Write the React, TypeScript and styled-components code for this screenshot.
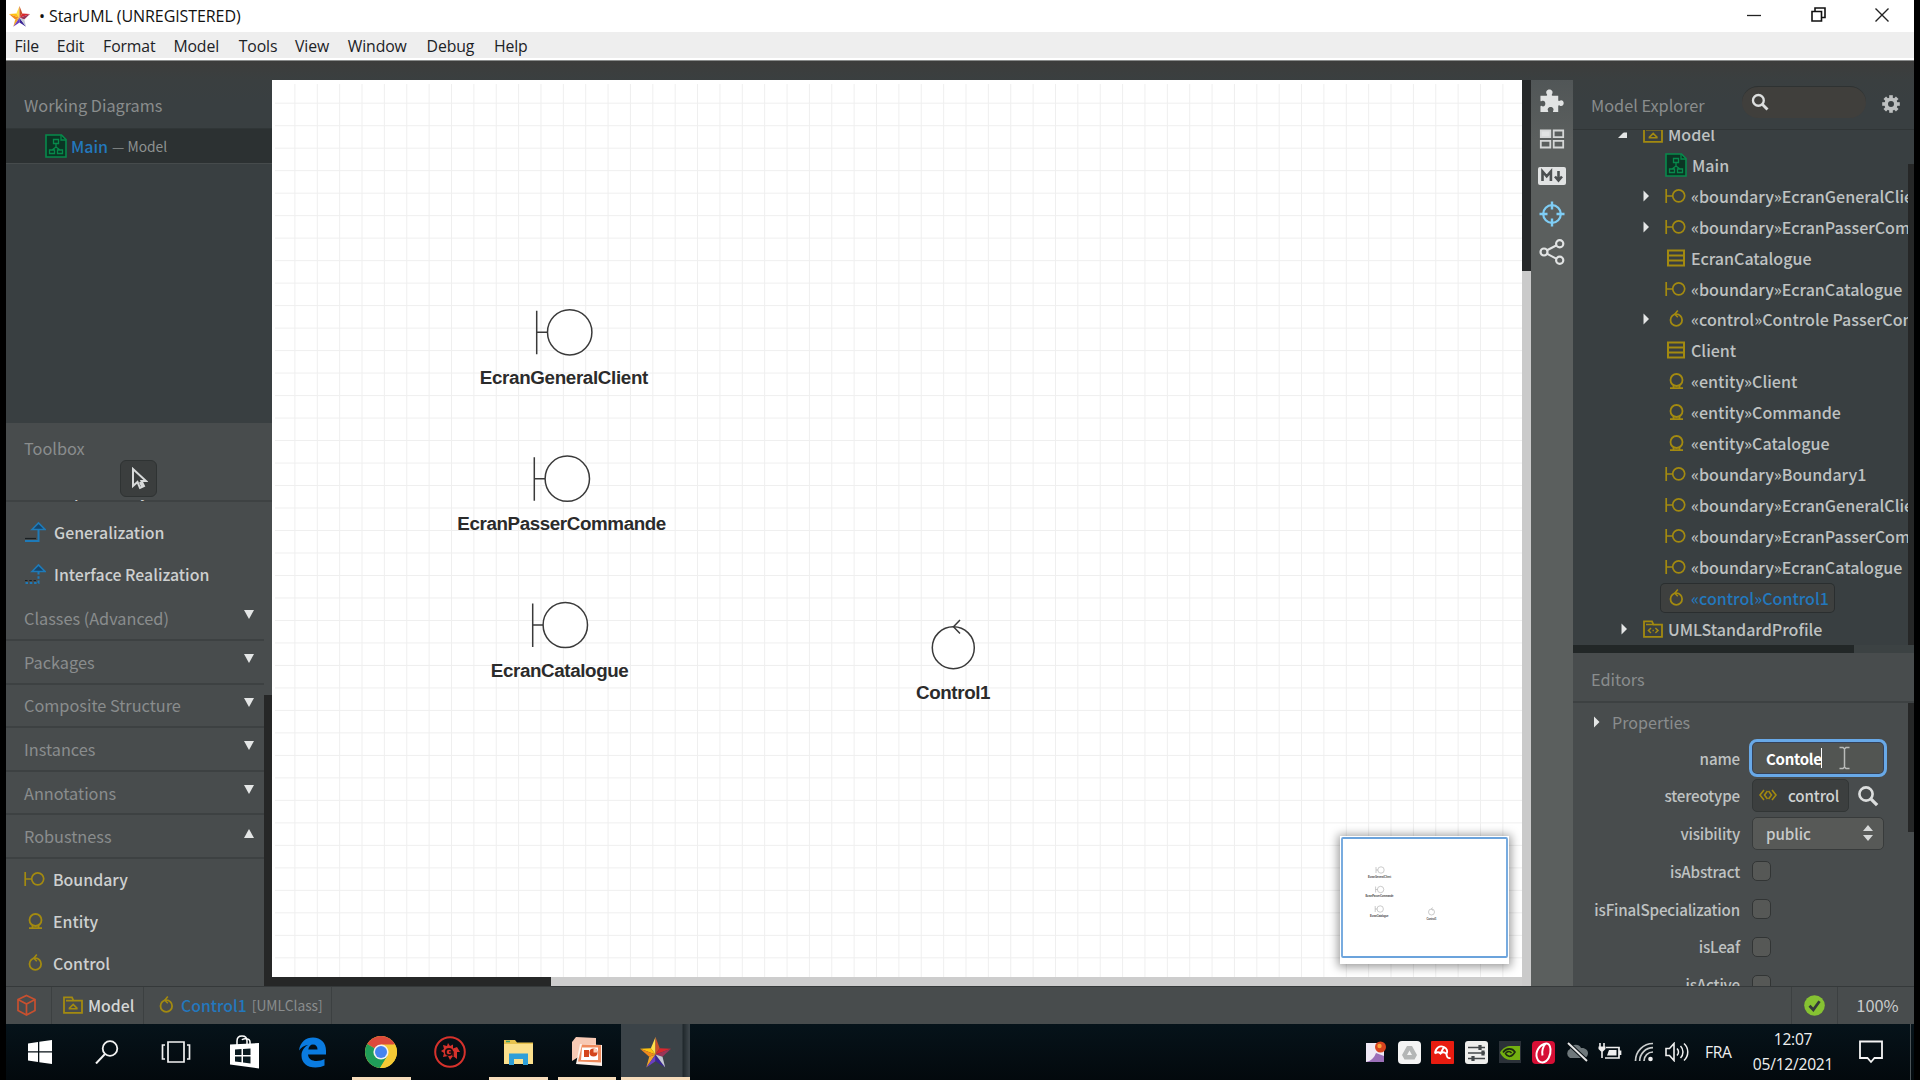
import React from "react";
import styled, { createGlobalStyle, css } from "styled-components";

const ui = '"Noto Sans CJK JP", "Noto Sans", sans-serif';
const sys = '"Open Sans", "Noto Sans", sans-serif';

const Global = createGlobalStyle`
  * { box-sizing: border-box; }
  body { margin: 0; background: #000; overflow: hidden; }
  svg { display: block; flex: none; }
`;

const Screen = styled.div`
  width: 1920px;
  height: 1080px;
  padding: 0 6px;
  background: #000;
  display: flex;
  flex-direction: column;
  font-family: ${ui};
  color: #c9cbcb;
  white-space: nowrap;
  overflow: hidden;
`;

/* ---------- window chrome ---------- */
const TitleBar = styled.header`
  height: 32px;
  flex: none;
  background: #fff;
  display: flex;
  align-items: center;
  padding-left: 3px;
  font: 16px/30px ${sys};
  color: #111;
`;
const TitleText = styled.span`
  margin-left: 9px;
  flex: 1;
  letter-spacing: -0.08px;
`;
const WindowButton = styled.span`
  width: 64px;
  display: flex;
  justify-content: center;
  padding-bottom: 3px;
`;
const MenuBar = styled.nav`
  height: 29px;
  flex: none;
  display: flex;
  align-items: center;
  gap: 17.8px;
  padding: 0 0 0 8.5px;
  background: #eee;
  border-bottom: 1px solid #8a8c8c;
  box-shadow: inset 0 -2px #fff;
  font: 15.8px/26px ${sys};
  color: #1c2226;
`;
const MenuItem = styled.span<{ $w: number }>`
  width: ${(p) => p.$w}px;
  letter-spacing: -0.12px;
`;

/* ---------- work area ---------- */
const WorkArea = styled.main`
  height: 925px;
  flex: none;
  display: flex;
  background: linear-gradient(#3d3d3c, #3a3f40 19px, #393f41 40px);
`;
const Sidebar = styled.aside`
  width: 266px;
  flex: none;
  display: flex;
  flex-direction: column;
`;
const Working = styled.section`
  height: 362px;
  flex: none;
  padding-top: 19px;
`;
const PanelTitle = styled.h2`
  margin: 0;
  font-size: 16.3px;
  font-weight: 400;
  line-height: 24px;
  color: #8a8d8d;
`;
const WorkingHead = styled.div`
  height: 48px;
  padding: 13px 0 0 18px;
`;
const WorkingRow = styled.div`
  height: 36px;
  background: #2c3132;
  border-bottom: 1px solid #464b4c;
  border-top: 1px solid #303637;
  display: flex;
  align-items: center;
  padding-left: 39px;
  gap: 4px;
  font-size: 16px;
  color: #8e9191;
`;
const Blue = styled.span`
  color: #2378bd;
  font-weight: 500;
`;
const Small = styled.span`
  font-size: 13.8px;
`;
const Toolbox = styled.section`
  flex: 1;
  min-height: 0;
  background: #484c4d;
  display: flex;
  flex-direction: column;
`;
const ToolboxHead = styled.div`
  height: 79px;
  flex: none;
  padding: 13px 0 0 18px;
  border-bottom: 2px solid #3e4243;
  display: grid;
  grid-template-rows: 24px 36px;
  grid-template-columns: 1fr;
`;
const PointerButton = styled.div`
  width: 37px;
  height: 37px;
  margin-left: 96px;
  border: 1px solid #2f3333;
  border-radius: 6px;
  background: #3b3e3e;
  display: flex;
  align-items: center;
  justify-content: center;
`;
const ToolScroll = styled.div`
  flex: 1;
  display: flex;
  min-height: 0;
  margin-top: -2px;
  overflow: hidden;
`;
const ToolList = styled.div`
  width: 258px;
  margin-top: -30px;
`;
const ToolItem = styled.div<{ $indent?: boolean }>`
  height: 42px;
  display: flex;
  align-items: center;
  padding: 0 0 1px ${(p) => (p.$indent ? 48 : 18)}px;
  gap: 8px;
  font-size: 15.9px;
  font-weight: 500;
  color: #ced0d0;
`;
const ToolGroup = styled.div<{ $first?: boolean }>`
  height: ${(p) => (p.$first ? 45 : 43.6)}px;
  border-bottom: 2px solid #3d4142;
  display: flex;
  align-items: center;
  justify-content: space-between;
  padding: 0 10px 0 18px;
  font-size: 16.3px;
  color: #8a8d8d;
`;
const Arrow = styled.i<{ $up?: boolean }>`
  width: 0;
  height: 0;
  margin-bottom: 6px;
  border: 5px solid transparent;
  ${(p) =>
    p.$up
      ? css`border-bottom: 9px solid #e4e6e6; border-top: 0;`
      : css`border-top: 9px solid #e4e6e6; border-bottom: 0;`}
`;
const ThumbColumn = styled.div`
  width: 8px;
  padding-top: 195px;
`;
const Thumb = styled.div<{ $h: number }>`
  height: ${(p) => p.$h}px;
  background: #262727;
`;

/* ---------- canvas ---------- */
const CanvasPane = styled.section`
  width: 1259px;
  flex: none;
  margin-top: 19px;
  display: grid;
  grid-template-columns: 1250px 9px;
  grid-template-rows: 897px 9px;
`;
const CanvasView = styled.div`
  position: relative;
  background: #fff;
`;
const VScroll = styled.div`
  grid-row: 1 / 3;
  grid-column: 2;
  background: linear-gradient(#262829 191px, #cacaca 191px);
`;
const HScroll = styled.div`
  grid-row: 2;
  grid-column: 1;
  background: linear-gradient(90deg, #262727 279px, #cdcdcd 279px);
`;
const Minimap = styled.div`
  position: absolute;
  left: 1068px;
  top: 756px;
  width: 169px;
  height: 128px;
  background: #fff;
  box-shadow: 0 1px 9px 2px rgba(0, 0, 0, 0.4);
`;
const ToolStrip = styled.div`
  width: 42px;
  flex: none;
  margin-top: 19px;
  background: linear-gradient(#515657, #5b5f5e 60px);
  display: flex;
  flex-direction: column;
  align-items: center;
  padding: 2px 1px 0 0;
`;
const StripSlot = styled.div`
  height: 37.8px;
  display: flex;
  align-items: center;
`;

/* ---------- right panels ---------- */
const RightPane = styled.aside`
  flex: 1;
  min-width: 0;
  display: flex;
  flex-direction: column;
`;
const ExplorerHead = styled.div`
  height: 69px;
  flex: none;
  padding: 25px 12px 0 18px;
  border-bottom: 1px solid #303536;
  display: flex;
  align-items: flex-start;
`;
const ExplorerTitle = styled(PanelTitle)`
  width: 151px;
  padding-top: 7px;
`;
const SearchPill = styled.div`
  width: 124px;
  height: 32px;
  border-radius: 16px;
  border-top: 1px solid #2e3232;
  background: #403f3c;
  padding: 6px 9px;
`;
const Gear = styled.div`
  margin: 9px 0 0 16px;
`;
const Explorer = styled.div`
  height: 515px;
  flex: none;
  display: grid;
  grid-template-columns: 335px 6px;
`;
const Tree = styled.div`
  overflow: hidden;
  height: 515px;
`;
const TreeBody = styled.div`
  margin-top: -11.5px;
`;
const TreeRow = styled.div<{ $depth: number; $cut?: boolean }>`
  height: 30.93px;
  display: flex;
  align-items: center;
  padding-left: ${(p) => 45 + p.$depth * 22}px;
  font-size: 16.05px;
  font-weight: 500;
  color: #bfc2c2;
  & svg { clip-path: ${(p) => (p.$cut ? "inset(3px 0 0 0)" : "none")}; }
`;
const Twist = styled.span`
  width: 24px;
  height: 12px;
  flex: none;
  display: flex;
  align-items: center;
  justify-content: flex-start;
`;
const TreeLabel = styled.span<{ $selected?: boolean }>`
  height: 28px;
  flex: none;
  display: flex;
  align-items: center;
  gap: 5px;
  margin-left: 1px;
  padding-right: 5px;
  border-radius: 4px;
  ${(p) =>
    p.$selected &&
    css`
      background: #3e403f;
      box-shadow: 0 0 0 1px #2a2e2f;
      color: #2378bd;
      padding-left: 4px;
      margin-left: -3px;
    `}
`;
const ExplorerThumb = styled.div`
  padding-top: 34px;
`;
const TreeHScroll = styled.div`
  height: 8px;
  flex: none;
  background: linear-gradient(90deg, #222727 281px, #3c4243 281px);
`;
const Editors = styled.section`
  flex: 1;
  min-height: 0;
  background: #484c4d;
  overflow: hidden;
`;
const EditorsHead = styled.div`
  height: 50px;
  padding: 14px 0 0 18px;
  border-bottom: 2px solid #3d4142;
`;
const EditorBody = styled.div`
  display: grid;
  grid-template-columns: 335px 6px;
`;
const PropTitle = styled.div`
  height: 36px;
  display: flex;
  align-items: center;
  gap: 12px;
  padding: 2px 0 0 21px;
  font-size: 16.1px;
  color: #8a8d8d;
`;
const PropRow = styled.div`
  height: 37.8px;
  display: grid;
  grid-template-columns: 167px 1fr;
  column-gap: 12px;
  align-items: center;
`;
const PropLabel = styled.label`
  text-align: right;
  font-size: 15.2px;
  letter-spacing: -0.18px;
  font-weight: 500;
  line-height: 30px;
  padding-bottom: 1px;
  color: #bfc2c2;
`;
const NameField = styled.div`
  width: 138px;
  height: 38px;
  margin-left: -3px;
  border: 3px solid #68a9e8;
  border-radius: 8px;
  background: #525552;
  box-shadow: inset 0 0 0 1px #35425a;
  display: flex;
  align-items: center;
  padding: 0 0 0 14px;
  font-size: 15px;
  font-weight: 700;
  letter-spacing: -0.3px;
  color: #fff;
`;
const Caret = styled.i`
  width: 1.5px;
  height: 20px;
  margin: 0 17px 0 -1px;
  background: #fff;
`;
const StereoLine = styled.div`
  display: flex;
  align-items: center;
  gap: 8px;
`;
const StereoButton = styled.div`
  width: 97px;
  height: 33px;
  border: 1px solid #323636;
  border-radius: 5px;
  background: #3c3f3f;
  display: flex;
  align-items: center;
  gap: 11px;
  padding: 0 0 1px 6px;
  font-size: 15.2px;
  letter-spacing: -0.15px;
  font-weight: 500;
  color: #d0d2d2;
`;
const SelectBox = styled.div`
  width: 132px;
  height: 33px;
  border: 1px solid #383b3b;
  border-radius: 5px;
  background: #575957;
  display: flex;
  align-items: center;
  justify-content: space-between;
  padding: 0 10px 0 13px;
  font-size: 15.2px;
  letter-spacing: -0.1px;
  font-weight: 500;
  color: #c9cbcb;
`;
const Check = styled.div`
  width: 19px;
  height: 20px;
  border: 1px solid #323535;
  border-radius: 5px;
  background: #565856;
`;

/* ---------- status bar ---------- */
const StatusBar = styled.footer`
  height: 38px;
  flex: none;
  background: #484c4d;
  border-top: 1px solid #35393a;
  display: flex;
`;
const StatusCell = styled.div<{ $w: number; $right?: boolean }>`
  width: ${(p) => p.$w}px;
  display: flex;
  align-items: center;
  justify-content: ${(p) => (p.$right ? "center" : "flex-start")};
  gap: 5px;
  padding-bottom: 1px;
  font-size: 15.8px;
  ${(p) => (p.$right ? "border-left" : "border-right")}: 1px solid #3c4041;
`;
const StatusGap = styled.div`
  flex: 1;
`;
const CellIcon = styled.span<{ $l: number }>`
  margin-left: ${(p) => p.$l}px;
`;
const Zoom = styled.span`
  font-size: 16.4px;
  padding-left: 3px;
`;
const Bold = styled.span`
  font-weight: 500;
  color: #d4d6d6;
`;
const Dim = styled.span`
  font-size: 13.8px;
  color: #8a8d8d;
`;

/* ---------- taskbar ---------- */
const Taskbar = styled.footer`
  height: 56px;
  flex: none;
  background: linear-gradient(#06131a, #03090d);
  display: flex;
  color: #f0f0f0;
  font-family: ${sys};
`;
const TaskSlot = styled.div<{ $active?: boolean; $open?: boolean; $w?: number }>`
  width: ${(p) => p.$w ?? 68.5}px;
  display: flex;
  align-items: center;
  justify-content: center;
  padding-top: 3px;
  background: ${(p) => (p.$active ? "linear-gradient(90deg, #3b4348 61px, #20282c 62px, #3b4348 68px)" : "none")};
  border-bottom: 3px solid transparent;
  border-image: ${(p) =>
    p.$active
      ? "linear-gradient(#f6dcbb,#f6dcbb) 1"
      : p.$open
      ? "linear-gradient(90deg, transparent 9%, #f6dcbb 9%, #f6dcbb 91%, transparent 91%) 1"
      : "none"};
`;
const Tray = styled.div`
  margin-left: auto;
  display: flex;
  align-items: center;
`;
const TraySlot = styled.div`
  width: 33.5px;
  display: flex;
  justify-content: center;
`;
const Lang = styled.div`
  width: 53px;
  padding-left: 11px;
  font-size: 15.6px;
  letter-spacing: -0.3px;
`;
const Clock = styled.div`
  width: 92px;
  text-align: center;
  font-size: 15.6px;
  line-height: 25.5px;
  letter-spacing: -0.25px;
`;
const Notify = styled.div`
  width: 72px;
  height: 56px;
  border-right: 1px solid #4b5357;
  display: flex;
  align-items: center;
  justify-content: center;
  padding-right: 8px;
  margin-right: 3px;
`;

/* ---------- drawings ---------- */
const GOLD = "#a38a10";

const Svg = ({ w, h = w, vb, children }: { w: number; h?: number; vb?: string; children: React.ReactNode }) => (
  <svg width={w} height={h} viewBox={vb ?? `0 0 ${w} ${h}`} fill="none">
    {children}
  </svg>
);

type Kind = "boundary" | "entity" | "control" | "class" | "package" | "profile" | "diagram";

const Glyph = ({ kind }: { kind: Kind }) => {
  switch (kind) {
    case "boundary":
      return (
        <Svg w={21} h={20}>
          <path d="M1.2 3v14M1.2 10h6" stroke={GOLD} strokeWidth="1.7" />
          <circle cx="13.7" cy="9.8" r="6" stroke={GOLD} strokeWidth="1.7" />
        </Svg>
      );
    case "entity":
      return (
        <Svg w={21} h={20}>
          <circle cx="11.5" cy="9" r="6" stroke={GOLD} strokeWidth="1.8" />
          <path d="M5 17.2h13M8.5 14v3M14.5 14v3" stroke={GOLD} strokeWidth="1.8" />
        </Svg>
      );
    case "control":
      return (
        <Svg w={21} h={20}>
          <circle cx="11.3" cy="11" r="5.8" stroke={GOLD} strokeWidth="1.8" />
          <path d="M12.8 1.5l-3 3.700 3 3" stroke={GOLD} strokeWidth="1.6" />
        </Svg>
      );
    case "class":
      return (
        <Svg w={21} h={20}>
          <rect x="3" y="2.5" width="16" height="15" stroke={GOLD} strokeWidth="2" />
          <path d="M3 7.5h16M3 12.5h16" stroke={GOLD} strokeWidth="2" />
        </Svg>
      );
    case "package":
      return (
        <Svg w={20} h={20}>
          <path d="M1 17.8V2.4h8l1.5 3.2H19v12.2z" stroke={GOLD} strokeWidth="1.8" />
          <path d="M3 5.6h7M5.6 13.8h9M6 13.6l4.2-4.2 4.2 4.2" stroke={GOLD} strokeWidth="1.6" />
        </Svg>
      );
    case "profile":
      return (
        <Svg w={20} h={20}>
          <path d="M1 17.8V2.4h8l1.5 3.2H19v12.2z" stroke={GOLD} strokeWidth="1.8" />
          <path d="M3 5.6h7M8 9l-2.6 2.6L8 14M12.4 9l2.6 2.6-2.6 2.4M9.5 11.6h1.4" stroke={GOLD} strokeWidth="1.5" />
        </Svg>
      );
    case "diagram":
      return (
        <Svg w={22} h={24}>
          <path d="M1 1h15.5L21 5.5V23H1z" fill="#0b3524" stroke="#078a4b" strokeWidth="1.6" />
          <path d="M16 1v5h5" stroke="#078a4b" strokeWidth="1.3" />
          <path d="M8.5 5.5h5v4h-5zM11 9.500v3.500M11 13l-4 3M11 13l4 3M4.500 16h5v3.500h-5zM12.500 16h5v3.500h-5z" stroke="#078a4b" strokeWidth="1.3" />
        </Svg>
      );
  }
};

const Star = ({ s }: { s: number }) => (
  <Svg w={s} vb="0 0 32 32">
    <path d="M16 0l-4.800 11.500L16 18z" fill="#ffe04a" />
    <path d="M16 0l4.400 11.500L16 18z" fill="#c9502a" />
    <path d="M0 12l11.200-.5L16 18z" fill="#ffc20e" />
    <path d="M0 12l9.500 8.500L16 18z" fill="#f08a1d" />
    <path d="M32 12l-11.600-.5L16 18z" fill="#d9272e" />
    <path d="M32 12l-8.800 8.500L16 18z" fill="#9a3558" />
    <path d="M9.500 20.500l-3 11L16 18z" fill="#f3a526" />
    <path d="M6.500 31.500L16 25v-7z" fill="#6b3fc0" />
    <path d="M26 31.500L16 25v-7z" fill="#3a2596" />
    <path d="M26 31.500l-2.800-11L16 18z" fill="#c5c8d4" />
  </Svg>
);

const Magnifier = ({ s, w = 2.6 }: { s: number; w?: number }) => (
  <Svg w={s} vb="0 0 20 20">
    <circle cx="8.200" cy="8.200" r="6" stroke="#dcdede" strokeWidth={w} />
    <path d="M12.800 12.800L18.300 18.300" stroke="#dcdede" strokeWidth={w + 0.6} />
  </Svg>
);

const Generalization = ({ dashed }: { dashed?: boolean }) => (
  <Svg w={22} h={24}>
    <path d="M8 8.500L14.500 2l6.500 6.500z" fill="#16456b" stroke="#1e7ab8" strokeWidth="1.600" />
    <path d="M14.500 9v11H1" stroke="#1e7ab8" strokeWidth="2" strokeDasharray={dashed ? "2.500 1.800" : undefined} />
    <path d="M1 17.500h11" stroke="#1a1f22" strokeWidth="1.200" strokeDasharray={dashed ? "2.500 1.800" : undefined} />
  </Svg>
);

const gearTeeth = Array.from({ length: 8 }, (_, i) => i * 45);

const boundaries = [
  { bar: 536.7, cx: 569.7, cy: 332.3, label: "EcranGeneralClient", x: 479.8, w: 168.5, y: 384 },
  { bar: 534.3, cx: 567.3, cy: 478.7, label: "EcranPasserCommande", x: 457.3, w: 209, y: 530.3 },
  { bar: 532.7, cx: 565.3, cy: 625, label: "EcranCatalogue", x: 490.8, w: 138, y: 676.5 },
];

const Diagram = () => {
  const cols = Array.from({ length: 55 }, (_, i) => 294.9 + i * 22.37);
  const rows = Array.from({ length: 39 }, (_, i) => 103.2 + i * 22.49);
  return (
    <Svg w={1250} h={897} vb="272 80 1250 897">
      <g stroke="#efefef" strokeWidth="1">
        {cols.map((x) => <path key={x} d={`M${x} 84V977`} />)}
        {rows.map((y) => <path key={y} d={`M275 ${y}H1522`} />)}
      </g>
      <g stroke="#3a3a3a" strokeWidth="1.5">
        {boundaries.map((b) => (
          <g key={b.label}>
            <path d={`M${b.bar} ${b.cy - 21.5}v43.5M${b.bar} ${b.cy}H${b.cx - 22}`} />
            <ellipse cx={b.cx} cy={b.cy} rx="22.2" ry="22.6" fill="#fff" />
          </g>
        ))}
        <circle cx="953.3" cy="647.7" r="21" fill="#fff" />
        <path d="M960 620l-6.5 6.7 6.5 6.8" />
      </g>
      <g fill="#2b2b2b" fontFamily='"Liberation Sans", Arial, sans-serif' fontWeight="700" fontSize="18.8">
        {boundaries.map((b) => (
          <text key={b.label} x={b.x} y={b.y} textLength={b.w}>{b.label}</text>
        ))}
        <text x="916" y="698.5" textLength="74.5">Control1</text>
      </g>
    </Svg>
  );
};

const MiniDiagram = () => (
  <Svg w={169} h={128}>
    <rect x="2" y="2" width="165" height="119" rx="1" fill="#fff" stroke="#6ba3dc" strokeWidth="1.8" />
    <g stroke="#aaa" strokeWidth="0.6">
      {[34, 53.5, 73].map((y, i) => (
        <g key={y}>
          <path d={`M${36 - i * 0.4} ${y - 3}v6m0-3h2`} />
          <circle cx={41 - i * 0.4} cy={y} r="3.200" />
        </g>
      ))}
      <circle cx="91.5" cy="76" r="3" />
      <path d="M92.5 71.500l-1 1.500 1 1.500" />
    </g>
    <g fill="#444" fontFamily='"Liberation Sans", Arial, sans-serif' fontWeight="700" fontSize="2.600">
      <text x="28" y="41.5" textLength="23">EcranGeneralClient</text>
      <text x="25.5" y="61" textLength="28">EcranPasserCommande</text>
      <text x="30" y="80.5" textLength="18.500">EcranCatalogue</text>
      <text x="86.5" y="83.5" textLength="10">Control1</text>
    </g>
  </Svg>
);

const menus: [string, number][] = [
  ["File", 24.5], ["Edit", 28.5], ["Format", 52.5], ["Model", 47.5], ["Tools", 38.5],
  ["View", 35], ["Window", 61], ["Debug", 49.5], ["Help", 35],
];

const groups = ["Classes (Advanced)", "Packages", "Composite Structure", "Instances", "Annotations", "Robustness"];

type Node = { label: string; kind: Kind; depth: number; twist?: "open" | "closed"; selected?: boolean; cut?: boolean };
const nodes: Node[] = [
  { label: "Model", kind: "package", depth: 0, twist: "open", cut: true },
  { label: "Main", kind: "diagram", depth: 1 },
  { label: "«boundary»EcranGeneralClient", kind: "boundary", depth: 1, twist: "closed" },
  { label: "«boundary»EcranPasserCommande", kind: "boundary", depth: 1, twist: "closed" },
  { label: "EcranCatalogue", kind: "class", depth: 1 },
  { label: "«boundary»EcranCatalogue", kind: "boundary", depth: 1 },
  { label: "«control»Controle PasserCommande", kind: "control", depth: 1, twist: "closed" },
  { label: "Client", kind: "class", depth: 1 },
  { label: "«entity»Client", kind: "entity", depth: 1 },
  { label: "«entity»Commande", kind: "entity", depth: 1 },
  { label: "«entity»Catalogue", kind: "entity", depth: 1 },
  { label: "«boundary»Boundary1", kind: "boundary", depth: 1 },
  { label: "«boundary»EcranGeneralClient", kind: "boundary", depth: 1 },
  { label: "«boundary»EcranPasserCommande", kind: "boundary", depth: 1 },
  { label: "«boundary»EcranCatalogue", kind: "boundary", depth: 1 },
  { label: "«control»Control1", kind: "control", depth: 1, selected: true },
  { label: "UMLStandardProfile", kind: "profile", depth: 0, twist: "closed" },
];

const LeftSide = () => (
  <Sidebar>
    <Working>
      <WorkingHead><PanelTitle>Working Diagrams</PanelTitle></WorkingHead>
      <WorkingRow>
        <Glyph kind="diagram" />
        <Blue>Main</Blue>
        <Small>— Model</Small>
      </WorkingRow>
    </Working>
    <Toolbox>
      <ToolboxHead>
        <PanelTitle>Toolbox</PanelTitle>
        <PointerButton>
          <Svg w={18} h={24}>
            <path d="M3 2v17l4.500-4 2.500 6 4-2-2.500-5H16z" stroke="#d8dada" strokeWidth="2" />
            <path d="M9 15.500l2.500 5 2-1-2.300-5z" fill="#d8dada" />
          </Svg>
        </PointerButton>
      </ToolboxHead>
      <ToolScroll>
        <ToolList>
          <ToolItem $indent>Dependency</ToolItem>
          <ToolItem><Generalization />Generalization</ToolItem>
          <ToolItem><Generalization dashed />Interface Realization</ToolItem>
          {groups.map((g, i) => (
            <ToolGroup key={g} $first={i === 0}>
              {g}
              <Arrow $up={g === "Robustness"} />
            </ToolGroup>
          ))}
          <ToolItem><Glyph kind="boundary" />Boundary</ToolItem>
          <ToolItem><Glyph kind="entity" />Entity</ToolItem>
          <ToolItem><Glyph kind="control" />Control</ToolItem>
        </ToolList>
        <ThumbColumn><Thumb $h={291} /></ThumbColumn>
      </ToolScroll>
    </Toolbox>
  </Sidebar>
);

const Strip = () => (
  <ToolStrip>
    <StripSlot>
      <Svg w={25} h={25} vb="0 0 26 26">
        <path
          d="M1.500 8h6.200c.9 0 1-.8.500-1.500C6.600 4 8 1.500 10.800 1.500S15 4 13.500 6.500c-.4.700-.3 1.500.6 1.500H20v4.500c0 .9.700 1.200 1.400.7 2-1.400 4.300 0 4.300 2.500s-2.300 4-4.300 2.600c-.7-.5-1.400-.2-1.400.7V25h-4.600c-1 0-1-.7-.6-1.400 1-2-.4-3.900-2.700-3.900s-3.700 1.900-2.700 3.900c.4.700.3 1.400-.6 1.400H1.500v-5.500c0-.9.600-1.200 1.300-.7 1.900 1.100 3.800-.3 3.800-2.700s-1.900-3.600-3.800-2.500c-.7.500-1.300.2-1.300-.7z"
          fill="#e1e3e3"
        />
      </Svg>
    </StripSlot>
    <StripSlot>
      <Svg w={26} h={20}>
        <rect x="1" y="1" width="11" height="8" fill="#e1e3e3" />
        <path d="M1.800 1.500h9.500v6.700H1.800zM14.700 1.500h9.500v6.700h-9.500zM1.800 11.800h9.500v6.700H1.800zM14.700 11.800h9.500v6.700h-9.500z" stroke="#d5d7d7" strokeWidth="1.8" />
      </Svg>
    </StripSlot>
    <StripSlot>
      <Svg w={28} h={18}>
        <rect width="28" height="18" rx="2" fill="#e1e3e3" />
        <path d="M4.500 14V4.500l4.200 4.800 4.200-4.800V14M20.500 4v8M17 9.500l3.500 4 3.500-4" stroke="#4c5051" strokeWidth="2.6" />
      </Svg>
    </StripSlot>
    <StripSlot>
      <Svg w={26} h={26}>
        <circle cx="13" cy="13" r="8.800" stroke="#7fcdf5" strokeWidth="2.2" />
        <path d="M13 .5v8M13 17.500v8M.5 13h8M17.500 13h8" stroke="#7fcdf5" strokeWidth="2.4" />
      </Svg>
    </StripSlot>
    <StripSlot>
      <Svg w={26} h={26}>
        <path d="M4.700 13L21 4.500M4.700 13L21 21.700" stroke="#e1e3e3" strokeWidth="2" />
        <g fill="#5b5f5e" stroke="#e1e3e3" strokeWidth="2.2">
          <circle cx="5" cy="13" r="3.500" />
          <circle cx="20.700" cy="4.800" r="3.600" />
          <circle cx="20.700" cy="21.200" r="3.600" />
        </g>
      </Svg>
    </StripSlot>
  </ToolStrip>
);

const TwistMark = ({ state }: { state?: "open" | "closed" }) => (
  <Twist>
    {state === "open" && <Svg w={9} h={9}><path d="M9 0v9H0z" fill="#e4e6e6" /></Svg>}
    {state === "closed" && <Svg w={10} h={12}><path d="M3.500.5L9 6l-5.500 5.500z" fill="#e4e6e6" /></Svg>}
  </Twist>
);

const RightSide = () => (
  <RightPane>
    <ExplorerHead>
      <ExplorerTitle>Model Explorer</ExplorerTitle>
      <SearchPill><Magnifier s={18} /></SearchPill>
      <Gear>
        <Svg w={18} vb="0 0 18 18">
          <g fill="#bdc0c0">
            {gearTeeth.map((a) => <rect key={a} x="7.200" y="0.200" width="3.600" height="5" transform={`rotate(${a} 9 9)`} />)}
          </g>
          <circle cx="9" cy="9" r="4.800" stroke="#bdc0c0" strokeWidth="3.600" />
        </Svg>
      </Gear>
    </ExplorerHead>
    <Explorer>
      <Tree>
        <TreeBody>
          {nodes.map((n, i) => (
            <TreeRow key={i} $depth={n.depth} $cut={n.cut}>
              <TwistMark state={n.twist} />
              <TreeLabel $selected={n.selected}>
                <Glyph kind={n.kind} />
                {n.label}
              </TreeLabel>
            </TreeRow>
          ))}
        </TreeBody>
      </Tree>
      <ExplorerThumb><Thumb $h={481} /></ExplorerThumb>
    </Explorer>
    <TreeHScroll />
    <Editors>
      <EditorsHead><PanelTitle>Editors</PanelTitle></EditorsHead>
      <EditorBody>
        <div>
          <PropTitle>
            <Svg w={6} h={12}><path d="M0 .5L5.500 6 0 11.500z" fill="#e4e6e6" /></Svg>
            Properties
          </PropTitle>
          <PropRow>
            <PropLabel>name</PropLabel>
            <NameField>
              Contole
              <Caret />
              <Svg w={11} h={24}>
                <path d="M.5 1.500h3.500L5.500 3 7 1.500h3.500M.5 22.500h3.500L5.500 21 7 22.500h3.500M5.500 3v18" stroke="#b9bbb9" strokeWidth="1.5" />
              </Svg>
            </NameField>
          </PropRow>
          <PropRow>
            <PropLabel>stereotype</PropLabel>
            <StereoLine>
              <StereoButton>
                <Svg w={18} h={12}>
                  <path d="M5 1L1 6l4 5M8.500 2L5.500 6l3 4M9.500 2l3 4-3 4M13 1l4 5-4 5" stroke={GOLD} strokeWidth="1.6" />
                </Svg>
                control
              </StereoButton>
              <Magnifier s={22} w={2.4} />
            </StereoLine>
          </PropRow>
          <PropRow>
            <PropLabel>visibility</PropLabel>
            <SelectBox>
              public
              <Svg w={10} h={16}><path d="M5 0l5 6H0zM5 16l5-6H0z" fill="#d6d8d8" /></Svg>
            </SelectBox>
          </PropRow>
          {["isAbstract", "isFinalSpecialization", "isLeaf", "isActive"].map((p) => (
            <PropRow key={p}>
              <PropLabel>{p}</PropLabel>
              <Check />
            </PropRow>
          ))}
        </div>
        <Thumb $h={129} />
      </EditorBody>
    </Editors>
  </RightPane>
);

const Status = () => (
  <StatusBar>
    <StatusCell $w={46}>
      <CellIcon $l={10}>
        <Svg w={21} h={22}>
          <path d="M10.500 1.500l8.500 4v11l-8.500 4.500L2 16.500v-11zM2 5.500l8.500 4.500 8.500-4.500M10.500 10v11" stroke="#c8502f" strokeWidth="1.7" />
        </Svg>
      </CellIcon>
    </StatusCell>
    <StatusCell $w={92}>
      <CellIcon $l={11}><Glyph kind="package" /></CellIcon>
      <Bold>Model</Bold>
    </StatusCell>
    <StatusCell $w={188}>
      <CellIcon $l={11}><Glyph kind="control" /></CellIcon>
      <Blue>Control1</Blue>
      <Dim>[UMLClass]</Dim>
    </StatusCell>
    <StatusGap />
    <StatusCell $w={46} $right>
      <Svg w={21} h={21}>
        <circle cx="10.500" cy="10.500" r="10.300" fill="#86c232" />
        <path d="M5.500 10.800l3.800 4L15.500 6.200" stroke="#33393a" strokeWidth="2.8" />
      </Svg>
    </StatusCell>
    <StatusCell $w={77} $right><Zoom>100%</Zoom></StatusCell>
  </StatusBar>
);

const Taskline = () => (
  <Taskbar>
    <TaskSlot $w={67}>
      <Svg w={24} h={24}>
        <path d="M0 3.500L10 2v9.300H0zM11.300 1.800L24 0v11.300H11.300zM0 12.600h10V22L0 20.500zM11.300 12.600H24V24l-12.700-1.800z" fill="#fff" />
      </Svg>
    </TaskSlot>
    <TaskSlot>
      <Svg w={24} h={24}>
        <circle cx="15" cy="8.500" r="7.300" stroke="#f2f2f2" strokeWidth="1.8" />
        <path d="M10 14L1 23.500" stroke="#f2f2f2" strokeWidth="2" />
      </Svg>
    </TaskSlot>
    <TaskSlot>
      <Svg w={30} h={22}>
        <path d="M7 1h16v20H7zM4 4H1.500v14H4M26 4h2.500v14H26" stroke="#f2f2f2" strokeWidth="1.7" />
      </Svg>
    </TaskSlot>
    <TaskSlot>
      <Svg w={31} h={34}>
        <path d="M1 9.500L30 8v25.500L1 29.500z" fill="#fff" />
        <path d="M8 11V6c0-3 2-5 5-5s5 2 5 5v4M13 5c1-2 8-2 8 2v3" stroke="#fff" strokeWidth="1.5" />
        <path d="M6 14.500l6.500-.5v6H6zM14 13.900l7.500-.5V20H14zM6 21.500h6.500v5.800L6 26.500zM14 21.500h7.500v7L14 27.500z" fill="#0a1a20" />
      </Svg>
    </TaskSlot>
    <TaskSlot>
      <Svg w={29} h={31}>
        <path
          d="M1 13.500C2 5 8 .5 15 .5c8 0 13 5.500 13 13v4H10c.3 4.500 4 6.500 8.500 6.500 3 0 6-.8 8-2v6.500c-2.500 1.300-5.500 2-9 2C9 30.500 3.500 26 3.500 18.500c0-5 3-9 7-10.800C6 8.500 3 10.500 1 13.500zM10.300 12.500h9.200c0-3-1.500-5-4.500-5-2.600 0-4.300 2-4.700 5z"
          fill="#0a7be0"
          fillRule="evenodd"
        />
      </Svg>
    </TaskSlot>
    <TaskSlot $open>
      <Svg w={32} h={32}>
        <circle cx="16" cy="16" r="16" fill="#f5ca35" />
        <path d="M16 16L2.200 8a16 16 0 0 1 27.600 0z" fill="#dc4a3b" />
        <path d="M2.200 8A16 16 0 0 0 15 32l8-12-7-4z" fill="#1f9d58" />
        <path d="M16 8.500h14A16 16 0 0 1 15 32l7.500-12.500z" fill="#f5ca35" />
        <circle cx="16" cy="16" r="7.600" fill="#f1f1f1" />
        <circle cx="16" cy="16" r="6" fill="#4584ee" />
      </Svg>
    </TaskSlot>
    <TaskSlot>
      <Svg w={32} h={32}>
        <circle cx="16" cy="16" r="14.800" stroke="#d6322c" strokeWidth="2" />
        <path d="M14 7l2 3 3-1.500v4l4-1.500 3 5h-3v7l-4-3-3 4-2-4-5 1 1-4-3-2 3-2-1-4 4 1z" fill="#d6322c" />
        <circle cx="15" cy="16" r="3.200" stroke="#1a0e10" strokeWidth="1.8" />
        <path d="M15 16h4v4" stroke="#1a0e10" strokeWidth="1.5" />
      </Svg>
    </TaskSlot>
    <TaskSlot $open>
      <Svg w={31} h={26}>
        <path d="M1 1h11l2 2.500h16V25H1z" fill="#e8c24e" />
        <path d="M1 5h29v20H1z" fill="#fbe08c" />
        <path d="M6 26V14.500h19V26h-5v-6h-9v6z" fill="#2f9fd8" />
        <path d="M3 2.500h4" stroke="#3f9f6c" strokeWidth="1.5" />
      </Svg>
    </TaskSlot>
    <TaskSlot $open>
      <Svg w={33} h={32}>
        <path d="M6 1l20 1v8L2 25V6z" fill="#f7c9b4" />
        <path d="M10 8l22 1v21L6 28z" fill="#fdf1ea" />
        <path d="M12 8.500l19 .8v17.200L8 25.500z" fill="#ef8a5c" />
        <path d="M12 11.500h16v12.500H11z" fill="#fff" />
        <path d="M14 14h5v7h-5z" fill="#d4451c" />
        <circle cx="23.500" cy="16.500" r="4" fill="#d4451c" />
        <path d="M23.500 16.500v-4a4 4 0 0 1 4 4z" fill="#fbd0bb" />
      </Svg>
    </TaskSlot>
    <TaskSlot $active><Star s={31} /></TaskSlot>
    <Tray>
      <TraySlot>
        <Svg w={22} h={22}>
          <path d="M1 2h18v19H1z" fill="#efe9f5" />
          <path d="M1 21c5-1 8-4 10-9l8 3v6z" fill="#9b6fb8" />
          <circle cx="15.500" cy="6" r="5.500" fill="#d8431f" />
          <circle cx="14.500" cy="5" r="2.200" fill="#f7a33c" />
        </Svg>
      </TraySlot>
      <TraySlot>
        <Svg w={23} h={23}>
          <rect width="23" height="23" rx="4" fill="#f4f4f4" />
          <path d="M9 5h5l5 9-2.500 4.500h-10L4 14zM11.500 9.500L9 14h5z" fill="#b4b6b6" fillRule="evenodd" />
        </Svg>
      </TraySlot>
      <TraySlot>
        <Svg w={23} h={23}>
          <rect width="23" height="23" rx="1" fill="#e81c10" />
          <path d="M4 12.500C4.500 7 8.500 4 13 6c3 1.500 4 4.500 2.500 7M4 12.500c2-1.500 4-1.500 5.500 0L13 6M9.500 12.500c1.500-1.500 4-1.500 6 .5 0 3 1.500 4.500 4 4" stroke="#fff" strokeWidth="1.900" />
        </Svg>
      </TraySlot>
      <TraySlot>
        <Svg w={23} h={23}>
          <rect width="23" height="23" rx="3" fill="#eeeeec" />
          <path d="M3 6.500h17M3 12h17M3 17.500h17" stroke="#44484a" strokeWidth="1.7" />
          <path d="M15 4v5M18 9.500v5M8 15v5" stroke="#44484a" strokeWidth="3.2" />
        </Svg>
      </TraySlot>
      <TraySlot>
        <Svg w={22} h={22}>
          <rect width="22" height="22" fill="#2b3138" />
          <path d="M1 11.500C4 6.500 8 5 12 5h9v14h-9C7 19 3 16 1 11.500z" fill="#73b010" />
          <path d="M4 11.500c3-4.500 9-5 12-.5-3 5-7 6-9.500 1.500 2-2.500 4.500-2.500 6-.5" stroke="#1d2a10" strokeWidth="1.6" />
        </Svg>
      </TraySlot>
      <TraySlot>
        <Svg w={23} h={23}>
          <rect width="23" height="23" rx="4" fill="#d60f35" />
          <path d="M14 2.500C7 4 3 11 5 17c1 3 3 4.500 5.500 4.500C16 21 19 14 18.500 8 18 4 16.500 2 14 2.500c-3 2-4.500 8-3.500 12" stroke="#fff" strokeWidth="2" />
        </Svg>
      </TraySlot>
      <TraySlot>
        <Svg w={24} h={20}>
          <path d="M5 16a5 5 0 0 1 0-9c1-5 9-6 11-1 4-.5 7 2 7 5s-2 5-5 5z" fill="#6f787b" />
          <path d="M3 1l19 18" stroke="#0a1115" strokeWidth="4" />
          <path d="M3 1l19 18" stroke="#e9e9e9" strokeWidth="1.9" />
        </Svg>
      </TraySlot>
      <TraySlot>
        <Svg w={24} h={20}>
          <path d="M8 5.500h13v10.500H7M22.500 8.500v4.500" stroke="#f0f0f0" strokeWidth="1.7" />
          <path d="M11 8h7.500v5.500H9z" fill="#f0f0f0" />
          <path d="M2 1v4M6 1v4M4 9v7" stroke="#f0f0f0" strokeWidth="1.6" />
          <path d="M.5 4.500h7V7L5 9.500H3L.5 7z" fill="#f0f0f0" />
        </Svg>
      </TraySlot>
      <TraySlot>
        <Svg w={20} h={20}>
          <path d="M1.500 19A17.500 17.500 0 0 1 19 1.500M5.700 19A13.300 13.300 0 0 1 19 5.700M10 19a9 9 0 0 1 9-9" stroke="#c9cccc" strokeWidth="1.7" />
          <circle cx="16.500" cy="17" r="2.300" fill="#f0f0f0" />
        </Svg>
      </TraySlot>
      <TraySlot>
        <Svg w={24} h={20}>
          <path d="M1 6.500h3.500L9 1.500v17L4.500 13.500H1z" stroke="#f0f0f0" strokeWidth="1.6" />
          <path d="M12 6.500c2 2 2 5 0 7M15.500 4c3.300 3.300 3.300 8.700 0 12M19 1.500c5 4.500 5 12.500 0 17" stroke="#f0f0f0" strokeWidth="1.5" />
        </Svg>
      </TraySlot>
      <Lang>FRA</Lang>
      <Clock>12:07<br />05/12/2021</Clock>
      <Notify>
        <Svg w={24} h={24}>
          <path d="M1 1.500h22v16.500h-7.500L12 22l-3.500-4H1z" stroke="#f4f4f4" strokeWidth="1.8" />
        </Svg>
      </Notify>
    </Tray>
  </Taskbar>
);

export default function App() {
  return (
    <Screen>
      <Global />
      <TitleBar>
        <Star s={21} />
        <TitleText>• StarUML (UNREGISTERED)</TitleText>
        <WindowButton><Svg w={14} h={14}><path d="M0 7.500h14" stroke="#222" strokeWidth="1.3" /></Svg></WindowButton>
        <WindowButton>
          <Svg w={15} h={15}>
            <path d="M1 4.500h9.500V14H1zM4 4V1h10v9.500h-3" stroke="#111" strokeWidth="1.6" />
          </Svg>
        </WindowButton>
        <WindowButton><Svg w={14} h={14}><path d="M.5.5l13 13M13.500.5l-13 13" stroke="#222" strokeWidth="1.4" /></Svg></WindowButton>
      </TitleBar>
      <MenuBar>
        {menus.map(([m, w]) => <MenuItem key={m} $w={w}>{m}</MenuItem>)}
      </MenuBar>
      <WorkArea>
        <LeftSide />
        <CanvasPane>
          <CanvasView>
            <Diagram />
            <Minimap><MiniDiagram /></Minimap>
          </CanvasView>
          <VScroll />
          <HScroll />
        </CanvasPane>
        <Strip />
        <RightSide />
      </WorkArea>
      <Status />
      <Taskline />
    </Screen>
  );
}
